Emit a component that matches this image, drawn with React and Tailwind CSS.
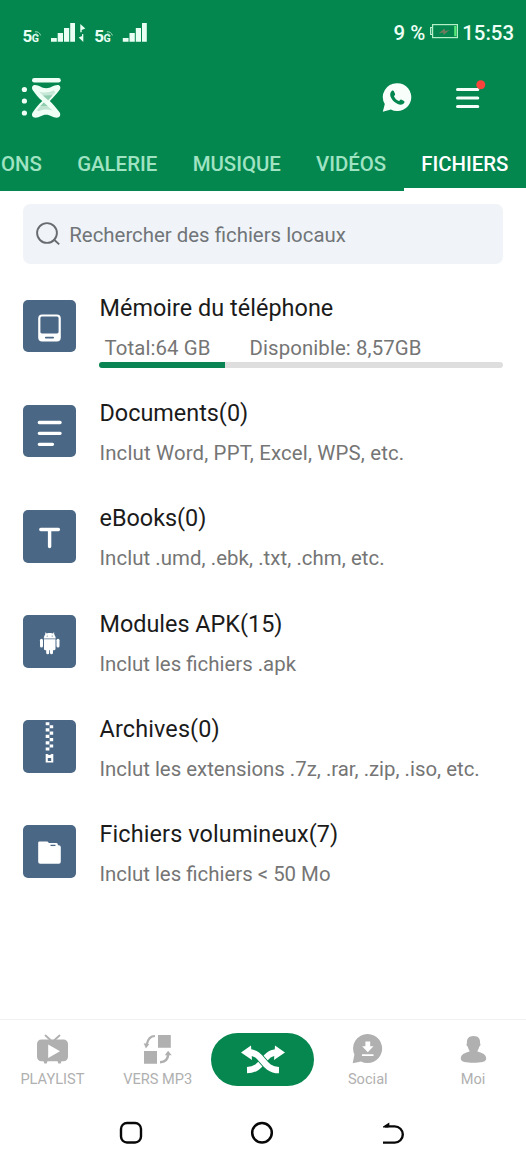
import React from "react";

function StatusSignals() {
  return (
    <svg width="130" height="26" viewBox="20 20 130 26" fill="#e9fff3">
      {[0, 71.8].map((dx) => (
        <g key={dx} transform={`translate(${dx} 0)`}>
          <text x="22.4" y="41.8" fontFamily="Roboto, sans-serif" fontWeight="700" fontSize="17">5</text>
          <text x="31.8" y="41.6" fontFamily="Roboto, sans-serif" fontWeight="700" fontSize="10.5">G</text>
          <path d="M35 31.8q4.200-.5 5.600 3.600M35.500 33.800q2.100 0 3 2" fill="none" stroke="#9fdcbc" strokeWidth="1" />
          <path d="M51 38h5.800v3.800H51zM57.700 33h5.300v8.800h-5.300zM64 28h5.200v13.800H64zM70.200 23H75v18.800h-4.800z" />
        </g>
      ))}
      <path d="M80.300 24l5 4.600-3.600 1.500v2.200h-1.400zM83.300 42l-4.600-4.600 3.400-1.400v-2h1.200z" />
    </svg>
  );
}

function BatteryIcon() {
  return (
    <svg className="-mt-[3px]" width="28" height="16" viewBox="430 23 28 16" fill="none">
      <path d="M432 27.500h-1.300v7H432" stroke="#c5f5d5" strokeWidth="1.200" />
      <rect x="432.600" y="24.600" width="24.800" height="13" stroke="#b5efc5" strokeWidth="1.200" />
      <path d="M455.300 26v10.200" stroke="#56e878" strokeWidth="2.200" />
      <path d="M438.500 33.500l6-5 .8 2.500 4.200-1-5.800 5-.6-2.500z" fill="#6f7a5f" />
    </svg>
  );
}

function Logo() {
  return (
    <svg width="44" height="44" viewBox="20 76 44 44" fill="#effff6">
      <circle cx="24.400" cy="89.500" r="2.600" />
      <circle cx="24.400" cy="101" r="2.600" />
      <circle cx="24.400" cy="113" r="2.600" />
      <rect x="32" y="78" width="28.800" height="4.600" rx="2.300" />
      <path d="M35 85c4 0 6.500 3.200 11.200 3.200S53.500 85 57.500 85c2.800 0 3.700 2.800 2 5-3 4-6.500 8-9.700 10.900 3.200 2.900 6.700 7.100 9.700 11.300 1.800 2.500.2 5.500-2.800 5.500-4 0-6.200-2.900-10.600-2.900s-6.500 2.900-10.500 2.900c-3.200 0-4.600-2.900-2.800-5.500 2.800-4.200 6-8 9.500-11.200-3.500-3-7-7-9.500-10.800C31.200 87.800 32.200 85 35 85z" />
      <path d="M39.200 92c4.800.8 9.500.6 14-1.500L55.500 92l-7.200 8.300z" fill="#c8e8d7" />
      <path d="M42.800 95.500l9.600-.2-4.100 5z" fill="#8fcdae" />
      <path d="M43.800 102.400l8.900 8.300c-5-1.800-10-1.400-14 .6l-2-1z" fill="#c0e4d1" />
      <path d="M43.800 102.400l3.800 3.500h-7.300z" fill="#8fcdae" />
    </svg>
  );
}

function WhatsApp() {
  return (
    <svg className="-mt-[2px]" width="30" height="30" viewBox="382 82 30 30">
      <path d="M397.300 83.200a13.900 13.900 0 1 1-6.400 26.200l-8.100 2.400 2-7.700a13.900 13.900 0 0 1 12.500-20.900z" fill="#f8fffb" />
      <path d="M391.700 91c.8-.7 1.800-.6 2.200.3l1.200 2.700c.3.700-.8 1.600-1.100 2.200.8 2.200 2.700 4 5 4.900.7-.5 1.400-1.900 2.100-1.600l2.900 1.400c.7.400.6 1.300.1 2.100-2.300 3.300-7.200 1.100-9.900-1.300-2.800-2.500-5.900-7.300-2.500-10.700z" fill="#03874f" />
    </svg>
  );
}

function MenuIcon() {
  return (
    <svg width="32" height="32" viewBox="455 79 32 32">
      <path d="M457.500 89.500h20.300M457.500 98h20.300M457.500 106.500h20.300" stroke="#f4fff9" strokeWidth="3" strokeLinecap="round" />
      <circle cx="480.800" cy="84.800" r="4.500" fill="#f7433b" />
    </svg>
  );
}

function SearchIcon() {
  return (
    <svg width="26" height="26" viewBox="35 221 26 26" fill="none" stroke="#686b6f" strokeWidth="1.900">
      <circle cx="47" cy="233" r="9.900" />
      <path d="M53.600 239.200l5.600 5.200" />
    </svg>
  );
}

const tileShapes = {
  phone: (
    <>
      <rect x="15.200" y="14.500" width="22.600" height="27" rx="4" />
      <rect x="17.400" y="16.500" width="18.200" height="17" rx="1.500" fill="#4a6785" />
      <path d="M22.800 37.600h7.400" stroke="#4a6785" strokeWidth="1.700" strokeLinecap="round" />
    </>
  ),
  document: <path d="M16.300 17.500h20.800M16.300 28.300h20.800M16.300 39.300h13.200" stroke="white" strokeWidth="3.300" strokeLinecap="round" />,
  text: <path d="M17.800 19.500h17.600M26.600 19.500v17" stroke="white" strokeWidth="3.400" strokeLinecap="round" />,
  android: (
    <>
      <path d="M21.200 23.300c.1-2.400 1.100-3.600 2.400-4.300l-1-1.500M32.300 23.300c-.1-2.400-1.100-3.600-2.400-4.300l1-1.500" stroke="white" strokeWidth=".6" />
      <path d="M21 23.500c.2-3.500 2.400-5.500 5.700-5.500s5.600 2 5.800 5.500zM21 24.300h11.500v9.400a1.600 1.600 0 0 1-1.600 1.600H30v2.500a1.500 1.500 0 0 1-3 0v-2.500h-.8v2.500a1.500 1.500 0 0 1-3 0v-2.500h-.6a1.600 1.600 0 0 1-1.600-1.600z" />
      <rect x="17" y="23.700" width="3" height="8.800" rx="1.500" />
      <rect x="33.500" y="23.700" width="3" height="8.800" rx="1.500" />
      <circle cx="24.200" cy="21" r=".6" fill="#4a6785" />
      <circle cx="29.200" cy="21" r=".6" fill="#4a6785" />
    </>
  ),
  archive: (
    <>
      <path d="M22.700 2.200h3.700v3h-3.700zM26.700 5.200h3.500v3h-3.500zM22.700 8.300h3.700v3.200h-3.700zM26.700 11.500h3.500v3.200h-3.500zM22.700 14.800h3.700V18h-3.700zM26.700 18h3.500v3.200h-3.500zM22.700 21.200h3.700v3.300h-3.700zM26.700 24.500h3.500v3h-3.500zM22.700 27.500h3.700v3h-3.700z" />
      <path d="M22.700 34h1.700q2.100 2 4.200 0h1.700v8.500h-7.600z" />
      <rect x="24.800" y="38" width="3.400" height="3" fill="#4a6785" />
    </>
  ),
  folder: (
    <>
      <path d="M16.500 16.500h7.800q1 0 1.500 1.500h7.500q1.500 0 1.800 2.300h.7q2 0 2 2v14.500q0 2-2 2H17.200q-2 0-2-2v-19q0-1.300 1.300-1.300z" />
      <path d="M27.500 20.400h5" stroke="#4a6785" strokeWidth="1.300" />
    </>
  ),
};

function Tile({ kind }) {
  return (
    <div className="mt-[3.500px] h-[52.700px] w-[52.700px] shrink-0 rounded-[5px] bg-[#4a6785]">
      <svg width="52.700" height="52.700" viewBox="0 0 52.700 52.700" fill="white">
        {tileShapes[kind]}
      </svg>
    </div>
  );
}

function StorageUsage() {
  return (
    <>
      <div className="mt-4 flex pl-[5px] text-[20.400px] leading-6 tracking-[0.1px] text-[#757575]">
        <span className="w-[145px]">Total:64 GB</span>
        <span>Disponible: 8,57GB</span>
      </div>
      <div className="mt-[2px] h-[6px] overflow-hidden rounded-full bg-[#dedede]">
        <div className="h-full w-[126px] bg-[#0a8452]" />
      </div>
    </>
  );
}

const files = [
  { kind: "phone", title: "Mémoire du téléphone", titleTracking: "tracking-[0.04px]" },
  { kind: "document", title: "Documents(0)", note: "Inclut Word, PPT, Excel, WPS, etc.", noteTracking: "tracking-[0.155px]" },
  { kind: "text", title: "eBooks(0)", note: "Inclut .umd, .ebk, .txt, .chm, etc.", noteTracking: "tracking-[0.06px]" },
  { kind: "android", title: "Modules APK(15)", note: "Inclut les fichiers .apk" },
  { kind: "archive", title: "Archives(0)", titleTracking: "tracking-[0.15px]", note: "Inclut les extensions .7z, .rar, .zip, .iso, etc." },
  { kind: "folder", title: "Fichiers volumineux(7)", titleTracking: "tracking-[0.13px]", note: "Inclut les fichiers < 50 Mo" },
];

function FileRow({ kind, title, note, titleTracking = "", noteTracking = "" }) {
  return (
    <li className="flex h-[105.200px] gap-[23.500px]">
      <Tile kind={kind} />
      <div className="flex-1 whitespace-nowrap">
        <h2 className={`text-[23.400px] leading-6 text-[#1b1b1b] ${titleTracking}`}>{title}</h2>
        {note ? <p className={`mt-4 text-[20.400px] leading-6 text-[#757575] ${noteTracking}`}>{note}</p> : <StorageUsage />}
      </div>
    </li>
  );
}

const navShapes = {
  playlist: (
    <>
      <path d="M9.500 1.500l5 4.500M23.500 1.500l-5 4.500" stroke="#b0b0b0" strokeWidth="1.800" strokeLinecap="round" />
      <rect x="1" y="5.500" width="31" height="21.700" rx="4.500" />
      <path d="M7.500 27h4l-.8 2.600H8.300zM21.500 27h4l-.8 2.600h-2.400z" />
      <path d="M12.200 10.400L24 17.200l-11.800 6.900z" fill="white" />
    </>
  ),
  convert: (
    <>
      <path d="M17 1h12.800v12.700H17zM3 17h13v12.700H3z" />
      <path d="M14 2C8.500 2 6.700 5.500 5.700 10.500" fill="none" stroke="#b0b0b0" strokeWidth="2.200" />
      <path d="M2.700 9.300l5.600.8-3.400 4.400z" />
      <path d="M19 28.300c5.500 0 8-3.500 8.300-8.500" fill="none" stroke="#b0b0b0" strokeWidth="2.500" />
      <path d="M23.800 21.300l3.300-4.600 3.600 4.600z" />
    </>
  ),
  social: (
    <>
      <path d="M16.700 0A14.500 14.500 0 1 1 10 27.400L1.700 29.300l1.700-8.800A14.500 14.500 0 0 1 16.700 0z" />
      <path d="M14.400 7.500h4.800v4.700h3.300l-5.700 6-5.700-6h3.300zM11 20.200h11.500v1.900H11z" fill="white" />
    </>
  ),
  me: (
    <path d="M16.500 2c4.800 0 7 2.800 6.500 7.200 1 .7.400 2.800-.7 3.400-.5 2.300-1.500 3.500-1.900 4.800 4.300 1.500 8.800 2.300 8.800 7.300 0 3.200-5.500 4-12.700 4S3.800 27.900 3.800 24.700c0-5 4.500-5.800 8.800-7.300-.4-1.300-1.400-2.500-1.900-4.800-1.100-.6-1.700-2.700-.7-3.400C9.500 4.800 11.700 2 16.500 2z" />
  ),
};

function NavItem({ kind, label }) {
  return (
    <div className="flex flex-1 flex-col items-center pr-[0.500px] pt-[14px]">
      <svg width="33" height="30" viewBox="0 0 33 30" fill="#b0b0b0">
        {navShapes[kind]}
      </svg>
      <span className="mt-[6px] text-[14.600px] leading-[18px] text-[#b0b0b0]">{label}</span>
    </div>
  );
}

function ShareButton() {
  return (
    <div className="flex flex-1 justify-center pt-[13px]">
      <button className="flex h-[53px] w-[103px] items-center justify-center rounded-full bg-[#06874f]">
        <svg width="46" height="30" viewBox="0 0 46 30" fill="none">
          <path d="M37 7.500C22.500 7.500 24 24.800 7 25.200" stroke="white" strokeWidth="6.300" />
          <path d="M9 7.500C23.500 7.500 22 24.800 39 25.200" stroke="#06874f" strokeWidth="8.200" />
          <path d="M9 7.500C23.500 7.500 22 24.800 39 25.200" stroke="white" strokeWidth="6.300" />
          <path d="M11 .5l1 14.500L1 7.500zM35 .5L34 15 45 7.500z" fill="white" />
        </svg>
      </button>
    </div>
  );
}

const tabClass = "shrink-0 text-[#a0e3c2]";

export default function App() {
  return (
    <div className="flex h-[1169px] w-[526px] flex-col overflow-hidden bg-white font-[Roboto,sans-serif]">
      <header className="flex h-[191px] shrink-0 flex-col bg-[#03874f]">
        <div className="flex h-[66px] items-center pl-5 pr-3">
          <StatusSignals />
          <div className="ml-auto flex items-center text-[20.400px] font-medium text-[#effff5]">
            <span className="mr-[5px]">9 %</span>
            <BatteryIcon />
            <span className="ml-1">15:53</span>
          </div>
        </div>
        <div className="flex h-[64px] items-center pl-5 pr-[39px]">
          <Logo />
          <div className="ml-auto flex items-center gap-[43px]">
            <WhatsApp />
            <div className="-mt-[6px]"><MenuIcon /></div>
          </div>
        </div>
        <nav className="flex h-[61px] whitespace-nowrap text-[20.400px] font-medium leading-[68px]">
          <span className={`${tabClass} w-[77.200px] pl-px`}>ONS</span>
          <span className={`${tabClass} w-[115.500px]`}>GALERIE</span>
          <span className={`${tabClass} w-[123.300px]`}>MUSIQUE</span>
          <span className={`${tabClass} w-[88px]`}>VIDÉOS</span>
          <span className="h-[61px] w-[122px] shrink-0 border-b-[3px] border-white pl-[17.200px] text-white">FICHIERS</span>
        </nav>
      </header>

      <main className="flex-1 pl-[23.300px] pr-[23.500px] pt-[12.500px]">
        <div className="flex h-[60.500px] items-center gap-[8px] rounded-[7px] bg-[#f0f4f8] pl-3">
          <SearchIcon />
          <span className="whitespace-nowrap pt-[3px] text-[20.400px] text-[#717579]">Rechercher des fichiers locaux</span>
        </div>
        <ul className="mt-8">
          {files.map((file) => (
            <FileRow key={file.kind} {...file} />
          ))}
        </ul>
      </main>

      <footer className="h-[150px] shrink-0">
        <div className="flex h-[78px] border-t border-[#f1f1f1]">
          <NavItem kind="playlist" label="PLAYLIST" />
          <NavItem kind="convert" label="VERS MP3" />
          <ShareButton />
          <NavItem kind="social" label="Social" />
          <NavItem kind="me" label="Moi" />
        </div>
        <div className="flex h-[72px] justify-center gap-[107.500px] pr-[1.500px] pt-6">
          <svg width="24" height="24" viewBox="0 0 24 24" fill="none" stroke="#080808" strokeWidth="2.400">
            <rect x="2" y="2" width="20" height="19.500" rx="6" />
          </svg>
          <svg width="24" height="24" viewBox="0 0 24 24" fill="none" stroke="#080808" strokeWidth="2.500">
            <circle cx="12" cy="11.800" r="9.800" />
          </svg>
          <svg width="24" height="24" viewBox="0 0 24 24" fill="none" stroke="#080808" strokeWidth="2.400">
            <path d="M1 21.600h11.700a8.100 8.100 0 0 0 0-16.200H3" />
            <path d="M1 5.600l6.300-4v3.700l-1 1.200H1z" fill="#080808" stroke="none" />
          </svg>
        </div>
      </footer>
    </div>
  );
}
